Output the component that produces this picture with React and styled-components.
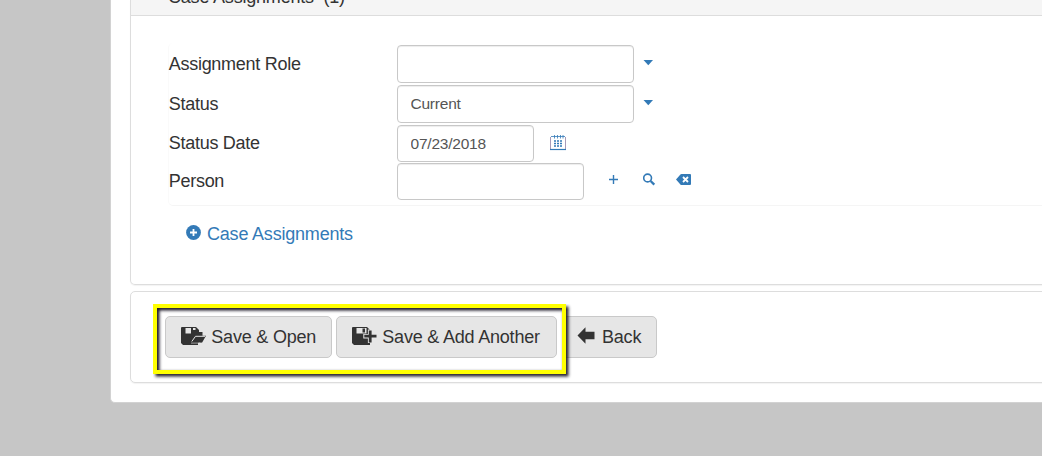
import React from "react";
import styled, { createGlobalStyle } from "styled-components";

const GlobalStyle = createGlobalStyle`
  * { box-sizing: border-box; }
  html, body { margin: 0; height: 456px; overflow: hidden; background: #c6c6c6; }
  body { font-family: "Liberation Sans", Arial, sans-serif; font-size: 18px; line-height: 26px; letter-spacing: -0.2px; color: #333; }
`;

const Page = styled.div`
  height: 456px;
  overflow: hidden;
  padding-left: 110px;
  background: #c6c6c6;
`;

const Sheet = styled.main`
  width: 1000px;
  height: 403px;
  padding-left: 19px;
  background: #fff;
  border: 1px solid #d2d2d2;
  border-top: 0;
  border-radius: 0 0 5px 5px;
`;

const Panel = styled.section`
  height: 285px;
  border: 1px solid #ddd;
  border-top: 0;
  border-radius: 0 0 5px 5px;
  box-shadow: 0 1px 1px rgba(0, 0, 0, 0.05);
`;

const PanelHeading = styled.header`
  display: flex;
  align-items: flex-end;
  height: 16px;
  padding: 0 0 5px 37px;
  overflow: hidden;
  background: #f5f5f5;
  border-bottom: 1px solid #ddd;
  white-space: pre;
`;

const Fields = styled.div`
  margin: 27px 0 0 37px;
  height: 163px;
  padding-top: 2px;
  border: 1px solid #f5f5f5;
  border-left-color: #fafafa;
  border-top: 0;
  border-radius: 5px;
`;

const Row = styled.div`
  display: flex;
  align-items: flex-start;
  height: ${(p) => p.$height}px;
`;

const Label = styled.label`
  width: 228px;
  padding-top: ${(p) => p.$top}px;
  letter-spacing: -0.27px;
  text-indent: -0.3px;
`;

const Input = styled.input`
  width: ${(p) => p.$width}px;
  height: ${(p) => p.$height}px;
  padding: 0 12px 0 12.5px;
  border: 1px solid #c8c8c8;
  border-radius: 4px;
  box-shadow: inset 0 1px 1px rgba(0, 0, 0, 0.075);
  background: #fff;
  color: #555;
  font: 15.5px "Liberation Sans", Arial, sans-serif;
  letter-spacing: -0.22px;
  outline: 0;
`;

const Action = styled.span`
  display: flex;
  margin: ${(p) => p.$top}px 0 0 ${(p) => p.$left}px;
  color: #337ab7;
  svg { display: block; }
`;

const AddLink = styled.a`
  display: flex;
  align-items: center;
  gap: 6px;
  margin: 15px 0 0 55px;
  color: #337ab7;
  svg { display: block; margin-top: -3px; }
`;

const ActionBar = styled.section`
  position: relative;
  display: flex;
  gap: 4px;
  height: 92px;
  margin-top: 6px;
  padding: 24px 0 0 34px;
  border: 1px solid #ddd;
  border-radius: 5px;
  box-shadow: 0 1px 1px rgba(0, 0, 0, 0.05);
`;

const Button = styled.button`
  display: flex;
  align-items: center;
  width: ${(p) => p.$width}px;
  height: 42px;
  padding: 0 0 0 15px;
  border: 1px solid #c9c9c9;
  border-radius: 5px;
  background: #e6e6e6;
  color: #333;
  font: 18px "Liberation Sans", Arial, sans-serif;
  letter-spacing: -0.2px;
  white-space: nowrap;
  svg { display: block; flex: none; margin: -3px 5.3px 0 0; }
`;

const BackButton = styled(Button)`
  margin-left: 1px;
  padding-left: 14px;
  svg { margin-right: 7px; }
`;

const Highlight = styled.div`
  position: absolute;
  left: 22px;
  top: 12px;
  width: 413px;
  height: 70px;
  border: 4px solid #ff0;
  box-shadow: 2px 2px 3px 0.5px rgba(20, 15, 30, 0.95), inset 2px 2px 3px 0.5px rgba(20, 15, 30, 0.95);
  clip-path: inset(0 -8px -8px 0);
  pointer-events: none;
`;

const CaretIcon = () => (
  <svg width="10" height="6" viewBox="0 0 10 6"><path d="M.5 0h9.5L5.3 5.3Z" fill="currentColor" /></svg>
);

const CalendarIcon = () => (
  <svg width="16" height="16" viewBox="0 0 16 16" fill="none" stroke="currentColor">
    <path d="M.5 2v12M15.5 2v12" stroke="#a79bb8" />
    <path d="M1 1.5h14" strokeWidth=".8" />
    <path d="M4.5 0v3.5M7.5 0v3.5M10.5 0v3.5M13 0v3.5" strokeWidth=".8" />
    <path d="M0 14.5h16" strokeWidth="1.2" />
    <path d="M4 6h2M7 6h2M10 6h2M4 8.5h2M7 8.5h2M10 8.5h2M4 11h2M7 11h2M10 11h2" strokeWidth="1.4" />
  </svg>
);

const PlusIcon = () => (
  <svg width="9" height="9" viewBox="0 0 9 9"><path d="M4.5 0v9M0 4.5h9" stroke="currentColor" strokeWidth="1.4" /></svg>
);

const SearchIcon = () => (
  <svg width="13" height="13" viewBox="0 0 13 13" fill="none" stroke="currentColor">
    <circle cx="4.6" cy="5" r="3.9" strokeWidth="1.6" />
    <path d="m7.6 8 3.7 3.6" strokeWidth="2.3" />
  </svg>
);

const EraseIcon = () => (
  <svg width="15" height="11" viewBox="0 0 15 11">
    <path d="M0 5.5 4.4.5Q4.8 0 5.5 0H14q1 0 1 1v9q0 1-1 1H5.5q-.7 0-1.1-.5Z" fill="currentColor" />
    <path d="m7 3 5 5m0-5L7 8" stroke="#fff" strokeWidth="1.8" />
  </svg>
);

const PlusCircleIcon = () => (
  <svg width="15" height="15" viewBox="0 0 15 15">
    <circle cx="7.5" cy="7.5" r="7.4" fill="currentColor" />
    <path d="M7.5 4v7M4 7.5h7" stroke="#fff" strokeWidth="1.8" />
  </svg>
);

const SaveOpenIcon = () => (
  <svg width="25" height="18" viewBox="0 0 25 18">
    <path d="M1 0h14l3 3v15H2L0 16V1q0-1 1-1Z" fill="#333" />
    <path d="M4.5 1H10v5.5H4.5Z" fill="#e6e6e6" />
    <path d="M12 1h2.5v2H12Z" fill="#e6e6e6" />
    <path d="M10 15.5V5q0-2 2-2h2.5L16 5h5.5v3.8H25l-4 7H10Z" fill="#333" />
    <path d="m10.8 14.5 3.7-5.2H24" fill="none" stroke="#e6e6e6" strokeWidth="1" />
    <path d="M17 15.8h4.3v2.2H17Z" fill="#e6e6e6" />
    <path d="M10 16.1h9" fill="none" stroke="#e6e6e6" strokeWidth=".6" />
  </svg>
);

const SaveAddIcon = () => (
  <svg width="25" height="18" viewBox="0 0 25 18">
    <path d="M1 0h14l3 3v15H2L0 16V1q0-1 1-1Z" fill="#333" />
    <path d="M4.5 1h10v5.5h-10Z" fill="#e6e6e6" />
    <path d="M10.5 1.5H13v4h-2.5Z" fill="#333" />
    <path d="M18.2 2.5v13.5M11.3 9.2H25" stroke="#e6e6e6" strokeWidth="4.6" />
    <path d="M18.2 3.5v12M12.3 9.2H24.5" stroke="#333" strokeWidth="2.8" />
  </svg>
);

const BackIcon = () => (
  <svg width="18" height="17" viewBox="0 0 18 17"><path d="M.5 8.5 8.5.2v4.6h9v7.4h-9v4.6Z" fill="#333" /></svg>
);

export default function App() {
  return (
    <Page>
      <GlobalStyle />
      <Sheet>
        <Panel>
          <PanelHeading>{"Case Assignments  (1)"}</PanelHeading>
          <Fields>
            <Row $height={40}>
              <Label $top={6}>Assignment Role</Label>
              <Input $width={237} $height={38} />
              <Action $left={9} $top={15}><CaretIcon /></Action>
            </Row>
            <Row $height={40}>
              <Label $top={6}>Status</Label>
              <Input $width={237} $height={38} defaultValue="Current" />
              <Action $left={9} $top={15}><CaretIcon /></Action>
            </Row>
            <Row $height={38}>
              <Label $top={5}>Status Date</Label>
              <Input $width={137} $height={37} defaultValue="07/23/2018" />
              <Action $left={16} $top={10}><CalendarIcon /></Action>
            </Row>
            <Row $height={38}>
              <Label $top={5}>Person</Label>
              <Input $width={187} $height={37} />
              <Action $left={25} $top={12}><PlusIcon /></Action>
              <Action $left={25} $top={10}><SearchIcon /></Action>
              <Action $left={20} $top={11}><EraseIcon /></Action>
            </Row>
          </Fields>
          <AddLink><PlusCircleIcon />Case Assignments</AddLink>
        </Panel>
        <ActionBar>
          <Button $width={167}><SaveOpenIcon />Save &amp; Open</Button>
          <Button $width={221}><SaveAddIcon />Save &amp; Add Another</Button>
          <BackButton $width={95}><BackIcon />Back</BackButton>
          <Highlight />
        </ActionBar>
      </Sheet>
    </Page>
  );
}
